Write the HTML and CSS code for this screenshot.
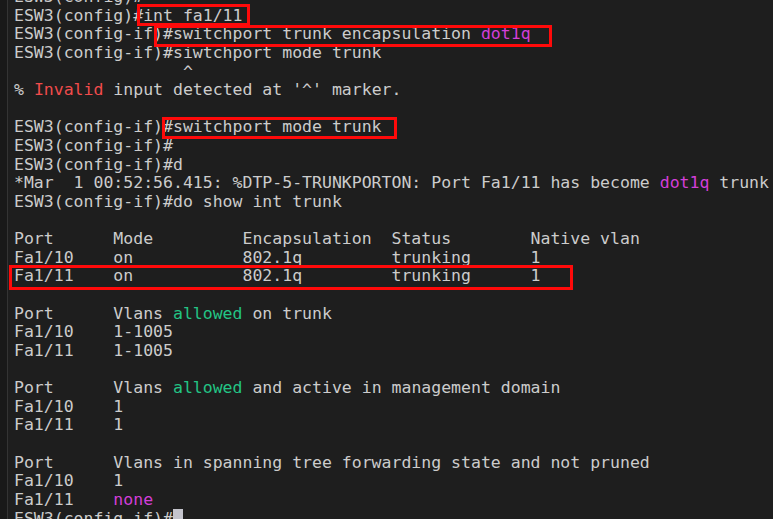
FILE: index.html
```html
<!DOCTYPE html>
<html>
<head>
<meta charset="utf-8">
<link rel="stylesheet" href="styles.css">
</head>
<body>
<div class="term">
  <div class="gutter"></div>
  <div class="screen">
<pre class="out">ESW3(config)#
ESW3(config)#int fa1/11
ESW3(config-if)#switchport trunk encapsulation <span class="mag">dot1q</span>
ESW3(config-if)#siwtchport mode trunk
                 ^
% <span class="red">Invalid</span> input detected at '^' marker.

ESW3(config-if)#switchport mode trunk
ESW3(config-if)#
ESW3(config-if)#d
*Mar  1 00:52:56.415: %DTP-5-TRUNKPORTON: Port Fa1/11 has become <span class="mag">dot1q</span> trunk
ESW3(config-if)#do show int trunk

Port      Mode         Encapsulation  Status        Native vlan
Fa1/10    on           802.1q         trunking      1
Fa1/11    on           802.1q         trunking      1

Port      Vlans <span class="grn">allowed</span> on trunk
Fa1/10    1-1005
Fa1/11    1-1005

Port      Vlans <span class="grn">allowed</span> and active in management domain
Fa1/10    1
Fa1/11    1

Port      Vlans in spanning tree forwarding state and not pruned
Fa1/10    1
Fa1/11    <span class="mag">none</span>
ESW3(config-if)#<span class="cursor"> </span></pre>
    <div class="mark m1"></div>
    <div class="mark m2"></div>
    <div class="mark m3"></div>
    <div class="mark m4"></div>
  </div>
</div>
</body>
</html>
```
FILE: styles.css
```css
html, body {
  margin: 0;
  padding: 0;
  background: #1e1e1e;
  overflow: hidden;
}
.term {
  display: flex;
  width: 773px;
  height: 519px;
  overflow: hidden;
  background: #1e1e1e;
}
.gutter {
  width: 7px;
  flex: none;
  background: #191919;
  border-right: 1px solid #343434;
}
.screen {
  position: relative;
  flex: 1;
}
.out {
  margin: -12px 0 0 6px;
  font-family: "DejaVu Sans Mono", "Liberation Mono", monospace;
  font-size: 16.5px;
  line-height: 18.62px;
  color: #cccccc;
  white-space: pre;
}
.mag { color: #d33fd8; }
.red { color: #f14c4c; }
.grn { color: #23c585; }
.cursor {
  background: #c4c4cc;
}
.mark {
  position: absolute;
  border: 3px solid #ff0a0a;
  box-sizing: border-box;
}
.m1 { left: 129px; top: 4px; width: 113px; height: 22px; }
.m2 { left: 146px; top: 25px; width: 398px; height: 22px; }
.m3 { left: 154px; top: 117px; width: 235px; height: 22px; }
.m4 { left: 1px; top: 265px; width: 564px; height: 25px; }
```
